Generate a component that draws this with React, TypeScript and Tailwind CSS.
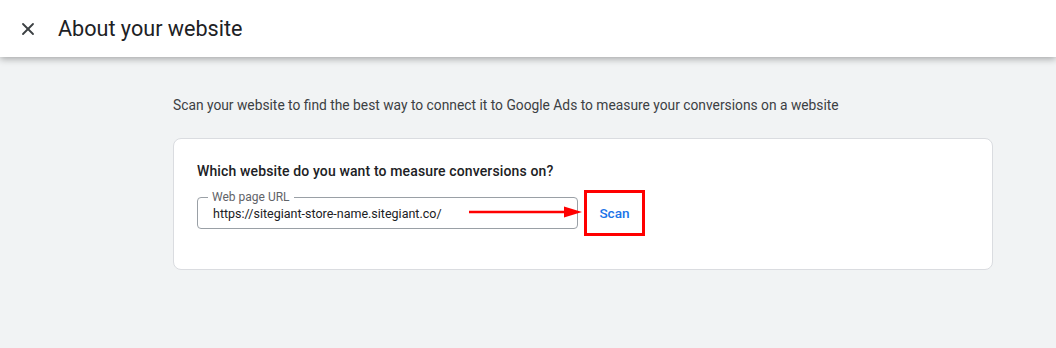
import { X } from "lucide-react";

const SITE_URL = "https://sitegiant-store-name.sitegiant.co/";

const App = () => {
	return (
		<div className="min-h-[348px] bg-[#f1f3f4] font-['Roboto',sans-serif]">
			{/* top bar */}
			<header className="relative z-10 flex h-[57px] items-center bg-white shadow-[0_2px_7px_rgba(0,0,0,0.32)]">
				<button className="ml-[17px] flex size-[22px] items-center justify-center text-[#3c4043]">
					<X className="size-[20px]" strokeWidth={2.2} />
				</button>
				<h1 className="ml-[19px] text-[21.6px] leading-[28px] text-[#202124]">
					About your website
				</h1>
			</header>

			<main className="ml-[173px] w-[820px] pt-[38px]">
				<p className="text-[13.8px] leading-[20px] text-[#3c4043]">
					Scan your website to find the best way to connect it to Google Ads to measure your conversions on a website
				</p>

				<div className="mt-[23px] rounded-[8px] border border-[#dadce0] bg-white pb-[33px] pl-[23px] pt-[22px]">
					<h2 className="text-[14px] font-medium leading-[20px] tracking-[0.13px] text-[#202124]">
						Which website do you want to measure conversions on?
					</h2>

					<div className="mt-[10px] flex items-start gap-[6px]">
						<div className="relative w-[381px]">
							<fieldset className="h-[38px] rounded-[4px] border border-[#9aa0a6] px-[10px]">
								<legend className="px-[4px] text-[12px] leading-[12px] text-[#5f6368]">
									Web page URL
								</legend>
								<div className="pl-[5px] pt-[1px] text-[12.5px] leading-[20px] text-[#202124]">
									{SITE_URL}
								</div>
							</fieldset>
							{/* annotation arrow */}
							<svg
								className="absolute left-[272px] top-[15px]"
								width="114"
								height="12"
								viewBox="0 0 114 12"
							>
								<line x1="0" y1="6" x2="98" y2="6" stroke="#ff0000" strokeWidth="2.5" />
								<polygon points="95,0.5 113,6 95,11.5" fill="#ff0000" />
							</svg>
						</div>

						<div className="-mt-[1px] flex h-[46px] w-[61px] items-center justify-center border-[3px] border-[#ff0000]">
							<button className="text-[13.6px] font-medium text-[#1a73e8]">
								Scan
							</button>
						</div>
					</div>
				</div>
			</main>
		</div>
	);
};

export default App;
